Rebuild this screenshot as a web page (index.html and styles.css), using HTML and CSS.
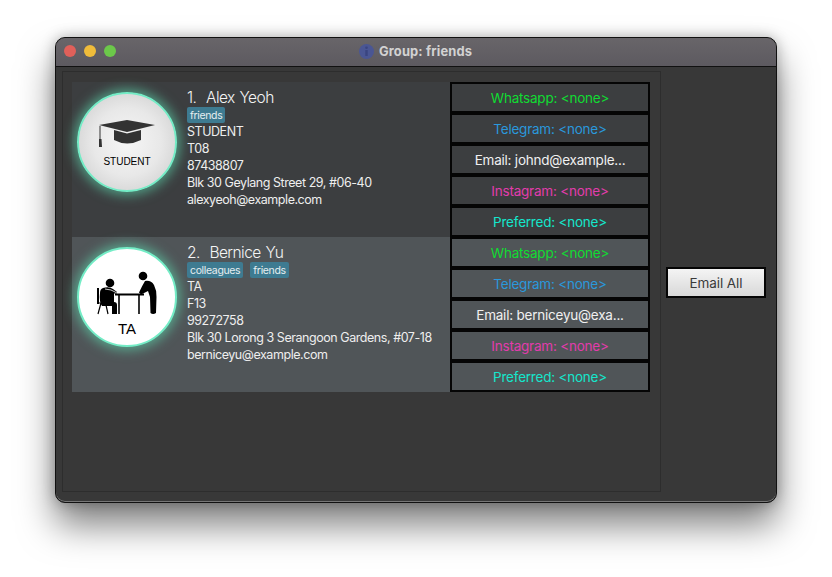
FILE: index.html
```html
<!DOCTYPE html>
<html lang="en">
<head>
<meta charset="utf-8">
<title>Group: friends</title>
<link rel="stylesheet" href="styles.css">
</head>
<body>
<div class="window">
  <header class="titlebar">
    <div class="lights"><span class="light red"></span><span class="light yellow"></span><span class="light green"></span></div>
    <div class="title">
      <svg class="info" width="15" height="15" viewBox="0 0 15 15"><circle cx="7.5" cy="7.5" r="7.5" fill="#4a5694"/><circle cx="7.5" cy="3.8" r="1.3" fill="#3a4580"/><rect x="6.3" y="6" width="2.4" height="6" fill="#3a4580"/></svg>
      <span>Group: friends</span>
    </div>
  </header>
  <main class="content">
    <section class="panel">
      <article class="card">
        <div class="info-side">
          <div class="avatar student">
            <svg width="100" height="100" viewBox="0 0 100 100">
              <path d="M22 33 L50 28 L78 33 L50 40 Z" fill="#333"/>
              <path d="M37 38 L50 41.5 L64 38 V48 Q50 55 37 48 Z" fill="#333"/>
              <path d="M23 34 V47" stroke="#333" stroke-width="1" fill="none"/>
              <path d="M22 47 H24.5 L25 55 H22 Z" fill="#333"/>
              <text x="50" y="73" class="student-label" text-anchor="middle">STUDENT</text>
            </svg>
          </div>
          <div class="details">
            <h2 class="name">1.&nbsp; Alex Yeoh</h2>
            <div class="tags"><span class="tag">friends</span></div>
            <p>STUDENT</p>
            <p>T08</p>
            <p>87438807</p>
            <p>Blk 30 Geylang Street 29, #06-40</p>
            <p>alexyeoh@example.com</p>
          </div>
        </div>
        <div class="links">
          <div class="link whatsapp">Whatsapp: &lt;none&gt;</div>
          <div class="link telegram">Telegram: &lt;none&gt;</div>
          <div class="link email">Email: johnd@example...</div>
          <div class="link instagram">Instagram: &lt;none&gt;</div>
          <div class="link preferred">Preferred: &lt;none&gt;</div>
        </div>
      </article>
      <article class="card alt">
        <div class="info-side">
          <div class="avatar ta">
            <svg width="100" height="100" viewBox="0 0 100 100">
              <circle cx="33" cy="36" r="4.300" fill="#000"/>
              <path d="M26 41 Q32 39 36 42 L40 45 L40 46.500 H37 V55 Q40 55 40 58 V67 H35 V59 H25 Q22 55 23 46 Q23 42 26 41 Z" fill="#000"/>
              <path d="M28 42 L34 43 L41 46.500" stroke="#fff" stroke-width=".8" fill="none"/>
              <path d="M21 41 V56 H31 M24 56 L21 67 M29 58 L31 67" stroke="#000" stroke-width="1.200" fill="none"/>
              <rect x="20" y="41" width="2" height="16" fill="#000"/>
              <rect x="38" y="46.500" width="29" height="2" fill="#000"/>
              <path d="M42 48 V67 M62 48 V67" stroke="#000" stroke-width="1.600" fill="none"/>
              <circle cx="66" cy="29" r="4.300" fill="#000"/>
              <path d="M68 34 Q74 33 77 38 Q80 44 79.500 50 L79 66 Q76 68 73.500 66 L73 50 L71 44 L64 47.500 L62 45.500 Q65 39 68 34 Z" fill="#000"/>
              <text x="50" y="87" class="ta-label" text-anchor="middle">TA</text>
            </svg>
          </div>
          <div class="details">
            <h2 class="name">2.&nbsp; Bernice Yu</h2>
            <div class="tags"><span class="tag">colleagues</span><span class="tag">friends</span></div>
            <p>TA</p>
            <p>F13</p>
            <p>99272758</p>
            <p>Blk 30 Lorong 3 Serangoon Gardens, #07-18</p>
            <p>berniceyu@example.com</p>
          </div>
        </div>
        <div class="links">
          <div class="link whatsapp">Whatsapp: &lt;none&gt;</div>
          <div class="link telegram">Telegram: &lt;none&gt;</div>
          <div class="link email">Email: berniceyu@exa...</div>
          <div class="link instagram">Instagram: &lt;none&gt;</div>
          <div class="link preferred">Preferred: &lt;none&gt;</div>
        </div>
      </article>
    </section>
    <aside class="actions"><button class="email-all" type="button">Email All</button></aside>
  </main>
</div>
</body>
</html>
```
FILE: styles.css
```css
* { box-sizing: border-box; }
html, body { height: 100%; }
body {
  margin: 0;
  padding: 37px 0 0 55px;
  background: #fff;
  font-family: Inter, "Liberation Sans", sans-serif;
  overflow: hidden;
}
.window {
  width: 722px;
  height: 466px;
  display: flex;
  flex-direction: column;
  background: #383838;
  border: 1px solid #111;
  border-radius: 10px;
  overflow: hidden;
  box-shadow: 0 22px 36px rgba(0,0,0,.5), 0 0 14px rgba(0,0,0,.28), inset 0 -1px 0 #777;
}
.titlebar {
  position: relative;
  height: 29px;
  flex: none;
  display: flex;
  align-items: center;
  justify-content: center;
  padding-bottom: 2px;
  background: linear-gradient(#686569, #5d5a60);
  border-bottom: 1px solid #111;
}
.lights { position: absolute; left: 8px; top: 7px; display: flex; gap: 8px; }
.light { width: 12px; height: 12px; border-radius: 50%; }
.red { background: #e0605a; }
.yellow { background: #f0bc3a; }
.green { background: #6cc84a; }
.title {
  display: flex;
  align-items: center;
  gap: 5px;
  font-size: 12.900px;
  font-weight: 700;
  letter-spacing: .15px;
  color: #d2d2d2;
}
.info { margin-left: -1px; }
.content { flex: 1; display: flex; padding: 4px 0 10px 6px; min-height: 0; }
.panel {
  width: 599px;
  flex: none;
  padding: 10px 0 0 9px;
  border: 1px solid #2d2d2d;
}
.card { display: flex; width: 578px; height: 155px; background: #3c3e40; }
.card.alt { background: #505558; }
.info-side { width: 378px; flex: none; display: flex; padding: 0 0 0 5px; }
.avatar {
  width: 100px;
  height: 100px;
  flex: none;
  margin-top: 10px;
  border-radius: 50%;
  border: 2px solid #74ecc6;
  box-shadow: 0 0 12px 3px rgba(95,225,180,.6);
  overflow: hidden;
}
.avatar svg { display: block; margin: -2px; }
.student { background: radial-gradient(circle, #f6f6f6 0%, #e8e8e8 50%, #c8c8c8 100%); }
.ta { background: #fff; }
.student-label { font: 10px "Liberation Sans", sans-serif; fill: #000; }
.ta-label { font: 15px "Liberation Sans", sans-serif; fill: #000; }
.details { margin-left: 10px; padding-top: 6px; color: #eee; min-width: 0; }
.name { margin: 0; height: 19px; font-size: 15.500px; font-weight: 300; line-height: 20px; letter-spacing: -.55px; word-spacing: 1px; color: #f4f4f4; }
.tags { display: flex; gap: 7px; height: 16px; }
.tag {
  height: 16px;
  padding: 0 3px;
  background: #3e7b91;
  border-radius: 2px;
  font-size: 10.500px;
  line-height: 17px;
  letter-spacing: -.35px;
  color: #e6eef0;
}
.details p { margin: 0; height: 17px; font-size: 12.500px; line-height: 17px; white-space: nowrap; letter-spacing: -.45px; }
.links { width: 200px; flex: none; display: flex; flex-direction: column; }
.link {
  height: 31px;
  display: flex;
  align-items: center;
  justify-content: center;
  border: 2px solid #050505;
  font-size: 13.500px;
  letter-spacing: -.22px;
  white-space: nowrap;
}
.whatsapp { color: #10dc32; }
.telegram { color: #2a98dc; }
.email { color: #f0f0f0; }
.instagram { color: #e23cac; }
.preferred { color: #14e6cc; }
.actions { flex: 1; display: flex; align-items: center; padding: 2px 0 0 5px; }
.email-all {
  width: 100px;
  height: 31px;
  padding: 0;
  border: 2px solid #050505;
  background: linear-gradient(#f4f4f4, #d8d8d8);
  color: #3a3a3a;
  font-family: inherit;
  font-size: 13.500px;
  letter-spacing: -.1px;
}
```
